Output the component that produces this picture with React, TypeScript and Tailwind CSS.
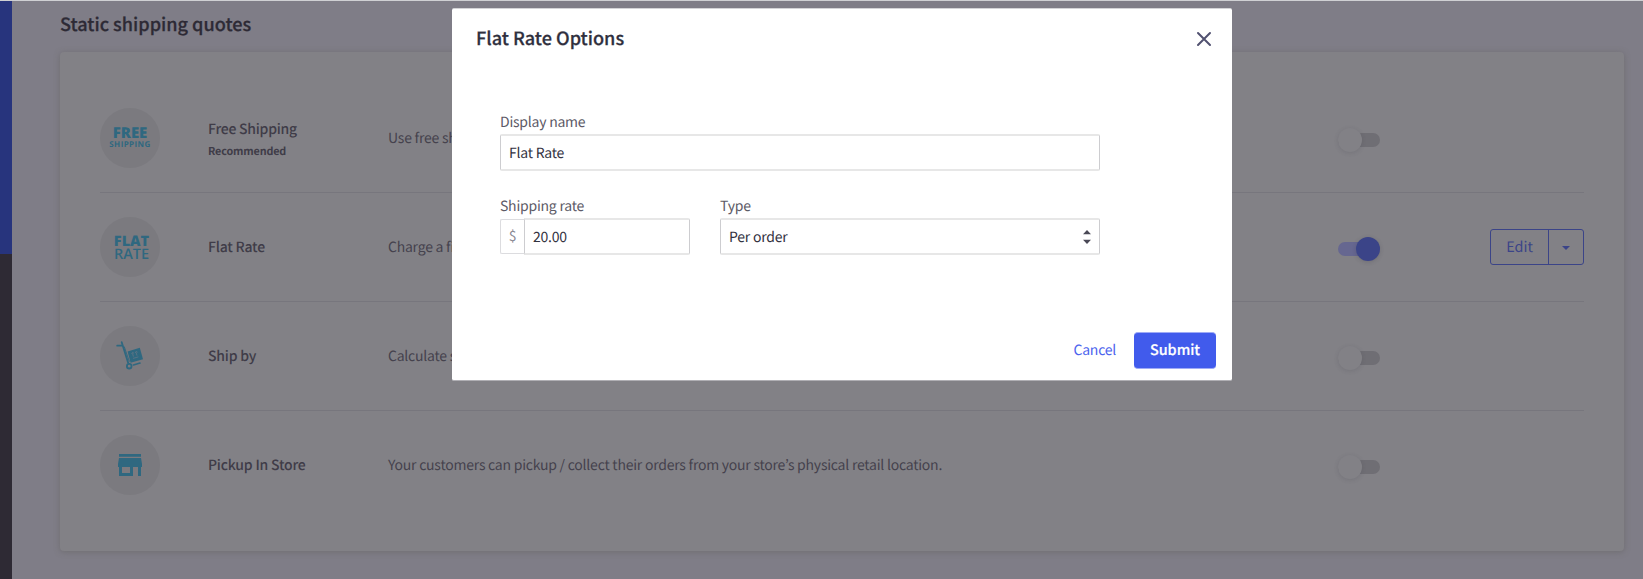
import type { ReactNode } from "react";

function Toggle({ on = false }: { on?: boolean }) {
  return on ? (
    <div className="flex h-[14px] w-[42px] items-center justify-end rounded-full bg-[#666790]">
      <div className="size-6 rounded-full bg-[#3b4488] shadow-[0_1px_4px_rgba(40,40,50,0.2)]" />
    </div>
  ) : (
    <div className="flex h-[14px] w-[42px] items-center rounded-full bg-[#6f6e74]">
      <div className="size-6 rounded-full bg-[#828186] shadow-[0_1px_4px_rgba(60,60,70,0.18)]" />
    </div>
  );
}

function FreeLogo() {
  return (
    <div className="flex flex-col items-center pt-px font-['Open_Sans',sans-serif] font-bold text-[#2f6880]">
      <span className="text-[15px] leading-[13px] font-extrabold">FREE</span>
      <span className="text-[8px] leading-[10px] tracking-[0.4px]">SHIPPING</span>
    </div>
  );
}

function FlatLogo() {
  return (
    <div className="flex flex-col items-center pt-px pl-[3px] font-['Open_Sans',sans-serif] text-[#2f6880]">
      <span className="text-[14.5px] leading-[13px] font-extrabold">FLAT</span>
      <span className="text-[14.5px] leading-[13px] font-semibold">RATE</span>
    </div>
  );
}

function TrolleyIcon() {
  return (
    <svg width="28" height="30" viewBox="0 0 28 30" fill="none" stroke="#2f6880">
      <path d="M1.2 4.7 6.6 4.5M5.7 1.2 12.2 22" strokeWidth="1.8" strokeLinecap="round" />
      <path d="M8.2 5.5 13.4 20.6" strokeWidth="0.9" />
      <circle cx="13.2" cy="25.2" r="2.3" strokeWidth="1.8" />
      <path d="M17.4 24 24 22.1" strokeWidth="1.6" strokeLinecap="round" />
      <path d="M11.6 10.4 23.8 6.8 27 18.2 14.6 21.8Z" fill="#2f6880" stroke="none" />
      <path d="M17.4 15.6 16.5 12.4M15.6 13l.9-1.6 1.5.9M21 14.6 20.1 11.4M19.2 12l.9-1.6 1.5.9M17 17.4l5.4-1.5" stroke="#5c7484" strokeWidth="0.9" />
    </svg>
  );
}

function StoreIcon() {
  return (
    <svg width="24" height="22" viewBox="0 0 24 22" fill="#2f6880">
      <path d="M1 0h22v2.7H1zM1 4h22l1 6v3h-1v9h-3v-9h-5v9H1v-9H0v-3zM4 13v6h8v-6z" fillRule="evenodd" />
    </svg>
  );
}

interface RowProps {
  logo: ReactNode;
  name: string;
  note?: string;
  text: string;
  on?: boolean;
  last?: boolean;
}

function Row({ logo, name, note, text, on, last }: RowProps) {
  return (
    <div className={last ? "flex h-[109px] items-center pb-px" : "flex h-[109px] items-center border-b border-[#77767d]"}>
      <div className="flex size-[60px] shrink-0 items-center justify-center rounded-full bg-[#7b7a7f]">{logo}</div>
      <div className="ml-12 w-[180px] shrink-0 pb-px text-[#3f3c48]">
        <div className={note ? "pt-0.5 text-[14px] leading-6 font-medium tracking-[-0.23px]" : "text-[14px] leading-6 font-medium tracking-[-0.2px]"}>{name}</div>
        {note && <div className="text-[10.8px] leading-5 font-bold tracking-[-0.15px]">{note}</div>}
      </div>
      <div className="w-[950px] shrink-0 pb-px text-[14px] leading-6 tracking-[-0.23px] whitespace-nowrap text-[#45424d]">{text}</div>
      <div className="pt-[3px]">
        <Toggle on={on} />
      </div>
      {on && (
        <div className="mb-px ml-auto flex h-9 w-[94px] rounded-[3px] border border-[#3b4488] text-[#3b4488]">
          <div className="flex flex-1 items-center justify-center border-r border-[#3b4488] text-[14.4px] leading-6">Edit</div>
          <div className="flex w-[34px] items-center justify-center pt-0.5">
            <svg width="8" height="4" viewBox="0 0 8 4" fill="#3b4488">
              <path d="M0 0h8L4 4z" />
            </svg>
          </div>
        </div>
      )}
    </div>
  );
}

export default function App() {
  return (
    <div className="relative flex h-[579px] w-[1643px] overflow-hidden border-t border-[#cfd0d3] bg-[#7f7d87] font-['Noto_Sans_CJK_KR',sans-serif] [text-rendering:geometricPrecision]">
      <aside className="w-3 shrink-0 bg-[#2e2a34]">
        <div className="h-[253px] bg-[#27347d]" />
      </aside>

      <main className="flex-1 pr-[19px] pl-12">
        <h1 className="h-[51px] pt-[9px] text-[18.1px] leading-7 font-medium text-[#2d2a35] [-webkit-text-stroke:0.25px]">Static shipping quotes</h1>
        <section className="h-[499px] rounded-[4px] bg-[#828186] px-10 pt-8 shadow-[0_1px_6px_rgba(90,90,85,0.45)]">
          <Row logo={<FreeLogo />} name="Free Shipping" note="Recommended" text="Use free shipping" />
          <Row logo={<FlatLogo />} name="Flat Rate" text="Charge a fixed" on />
          <Row logo={<TrolleyIcon />} name="Ship by" text="Calculate shipping" />
          <Row logo={<StoreIcon />} name="Pickup In Store" text="Your customers can pickup / collect their orders from your store’s physical retail location." last />
        </section>
      </main>

      <div role="dialog" className="absolute top-[7px] left-[452px] flex h-[373px] w-[780px] flex-col rounded-[2px] border-y border-t-[#d3d3d6] border-b-[#b0afb4] bg-white">
        <div className="flex items-start justify-between pt-[15px] pr-5 pl-6">
          <h2 className="text-[18.1px] leading-7 font-medium text-[#2f2f3d] [-webkit-text-stroke:0.25px]">Flat Rate Options</h2>
          <svg width="16" height="16" viewBox="0 0 16 16" className="mt-[7px]" stroke="#515170" strokeWidth="2" strokeLinecap="round">
            <path d="M2 2l12 12M14 2 2 14" />
          </svg>
        </div>

        <div className="mt-[49px] w-[648px] pl-12 text-[14px] tracking-[-0.23px]">
          <div className="h-[33px] pt-[9px] leading-6 text-[#5c5a66]">Display name</div>
          <div className="flex h-[37px] items-center rounded-[2px] border-x border-y-2 border-x-[#cdcdd0] border-y-[#e7e7e7] px-2 pt-px text-[#33323f]">Flat Rate</div>
          <div className="mt-[18px] flex gap-[30px]">
            <div className="w-[190px]">
              <div className="h-[29px] pt-[5px] leading-6 text-[#5c5a66]">Shipping rate</div>
              <div className="flex h-[37px] items-center">
                <div className="flex h-[35px] w-6 items-center justify-center rounded-l-[2px] border border-r-0 border-[#dcdcdf] pb-px text-[#8b8a93]">$</div>
                <div className="flex h-[37px] flex-1 items-center rounded-r-[2px] border-x border-y-2 border-x-[#cdcdd0] border-y-[#e7e7e7] px-2 pt-px text-[#33323f]">20.00</div>
              </div>
            </div>
            <div className="w-[380px]">
              <div className="h-[29px] pt-[5px] leading-6 text-[#5c5a66]">Type</div>
              <div className="flex h-[37px] items-center justify-between rounded-[2px] border-x border-y-2 border-x-[#cdcdd0] border-y-[#e7e7e7] px-2 text-[#33323f]">
                <span className="pt-px">Per order</span>
                <svg width="8" height="14" viewBox="0 0 8 14" fill="#4a4956">
                  <path d="M0 4.2 4 0l4 4.2zM0 9.8 4 14l4-4.2z" />
                </svg>
              </div>
            </div>
          </div>
        </div>

        <div className="mt-auto mb-[11px] flex items-center justify-end gap-[18px] pr-4 text-[14.4px]">
          <span className="pb-px text-[14px] tracking-[-0.23px] text-[#4c63ee]">Cancel</span>
          <div className="flex h-[37px] w-[82px] items-center justify-center rounded-[4px] border-y border-[#9fabf6] bg-[#415bec] pb-px font-medium text-white [-webkit-text-stroke:0.2px]">Submit</div>
        </div>
      </div>
    </div>
  );
}
